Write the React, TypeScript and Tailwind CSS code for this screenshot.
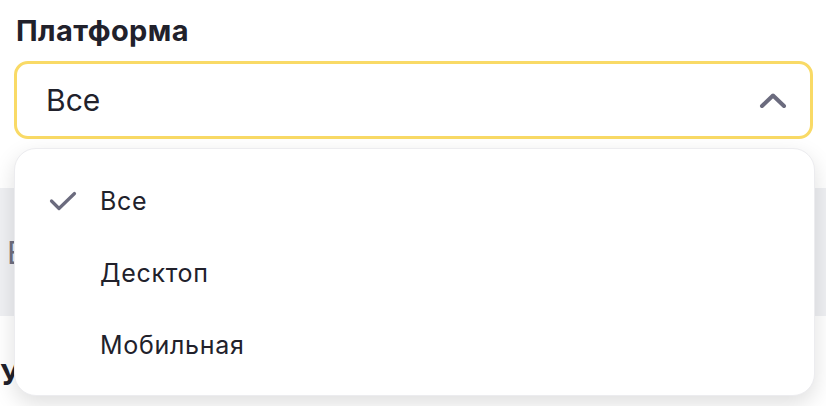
import React from "react";

const ink = "text-[#21212b]";

function ChevronUp() {
  return (
    <svg width="28" height="18" viewBox="0 0 28 18" fill="none">
      <path d="M3 15L14 4.5L25 15" stroke="#6b6b7e" strokeWidth="4" strokeLinecap="round" strokeLinejoin="round" />
    </svg>
  );
}

function Check() {
  return (
    <svg width="28" height="20" viewBox="0 0 28 20" fill="none">
      <path d="M2.5 10L10 17.5L25.5 2.5" stroke="#6b6b7e" strokeWidth="3.2" strokeLinecap="round" strokeLinejoin="round" />
    </svg>
  );
}

const options = ["Все", "Десктоп", "Мобильная"];

export default function App() {
  return (
    <div
      className="relative w-[826px] h-[406px] overflow-hidden bg-white"
      style={{ fontFamily: "Inter, 'Noto Sans', sans-serif" }}
    >
      <div className={`pl-[16px] pt-[14px] text-[29px] leading-[34px] font-bold tracking-[0.4px] ${ink}`}>Платформа</div>

      <div className="mx-[14px] mt-[13px] h-[78px] w-[799px] rounded-[14px] border-[3px] border-[#f9da66] flex items-center justify-between pl-[29px] pr-[23px]">
        <span className={`text-[30px] leading-none ${ink}`}>Все</span>
        <ChevronUp />
      </div>

      <div className="mt-[49px] h-[128px] bg-[#eff0f3] flex items-center pl-[7px]">
        <span className="text-[31px] leading-none text-[#6f6f80]">Все</span>
      </div>

      <div className={`mt-[42px] text-[29px] leading-[34px] font-bold ${ink}`}>Устройство</div>

      <div className="absolute left-[14px] top-[148px] w-[801px] h-[248px] rounded-[22px] bg-white border border-[#ececef] shadow-[0_8px_22px_rgba(0,0,0,0.13)] py-[16px]">
        {options.map((o, i) => (
          <div key={o} className="h-[72px] flex items-center">
            <div className="w-[85px] flex pl-[34px]">{i === 0 && <Check />}</div>
            <span className={`text-[25px] leading-none tracking-[0.7px] ${ink}`}>{o}</span>
          </div>
        ))}
      </div>
    </div>
  );
}
